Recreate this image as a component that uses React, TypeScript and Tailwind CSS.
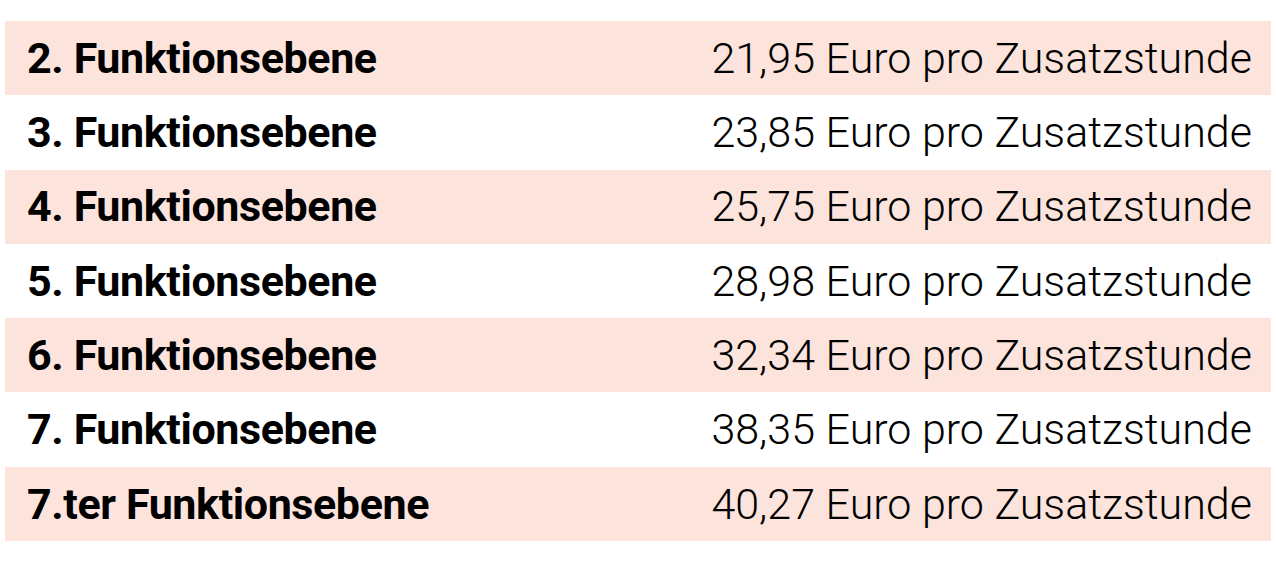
import React from 'react'

const rows = [
  { level: '2. Funktionsebene', rate: '21,95' },
  { level: '3. Funktionsebene', rate: '23,85' },
  { level: '4. Funktionsebene', rate: '25,75' },
  { level: '5. Funktionsebene', rate: '28,98' },
  { level: '6. Funktionsebene', rate: '32,34' },
  { level: '7. Funktionsebene', rate: '38,35' },
  { level: '7.ter Funktionsebene', rate: '40,27' },
]

export default function App() {
  return (
    <div className="w-[1276px] h-[561px] bg-white pt-[21px] pl-[5px] font-['Roboto',sans-serif] text-black">
      <div className="w-[1266px] h-[520px] grid grid-rows-7">
        {rows.map((row, i) => (
          <div
            key={row.level}
            className={`flex items-center justify-between pl-[22px] pr-[19px] ${i % 2 === 0 ? 'bg-[#fce4dc]' : 'bg-white'}`}
          >
            <span className="text-[43px] font-bold tracking-[-0.4px]">{row.level}</span>
            <span className="text-[43px] font-light">{row.rate} Euro pro Zusatzstunde</span>
          </div>
        ))}
      </div>
    </div>
  )
}
